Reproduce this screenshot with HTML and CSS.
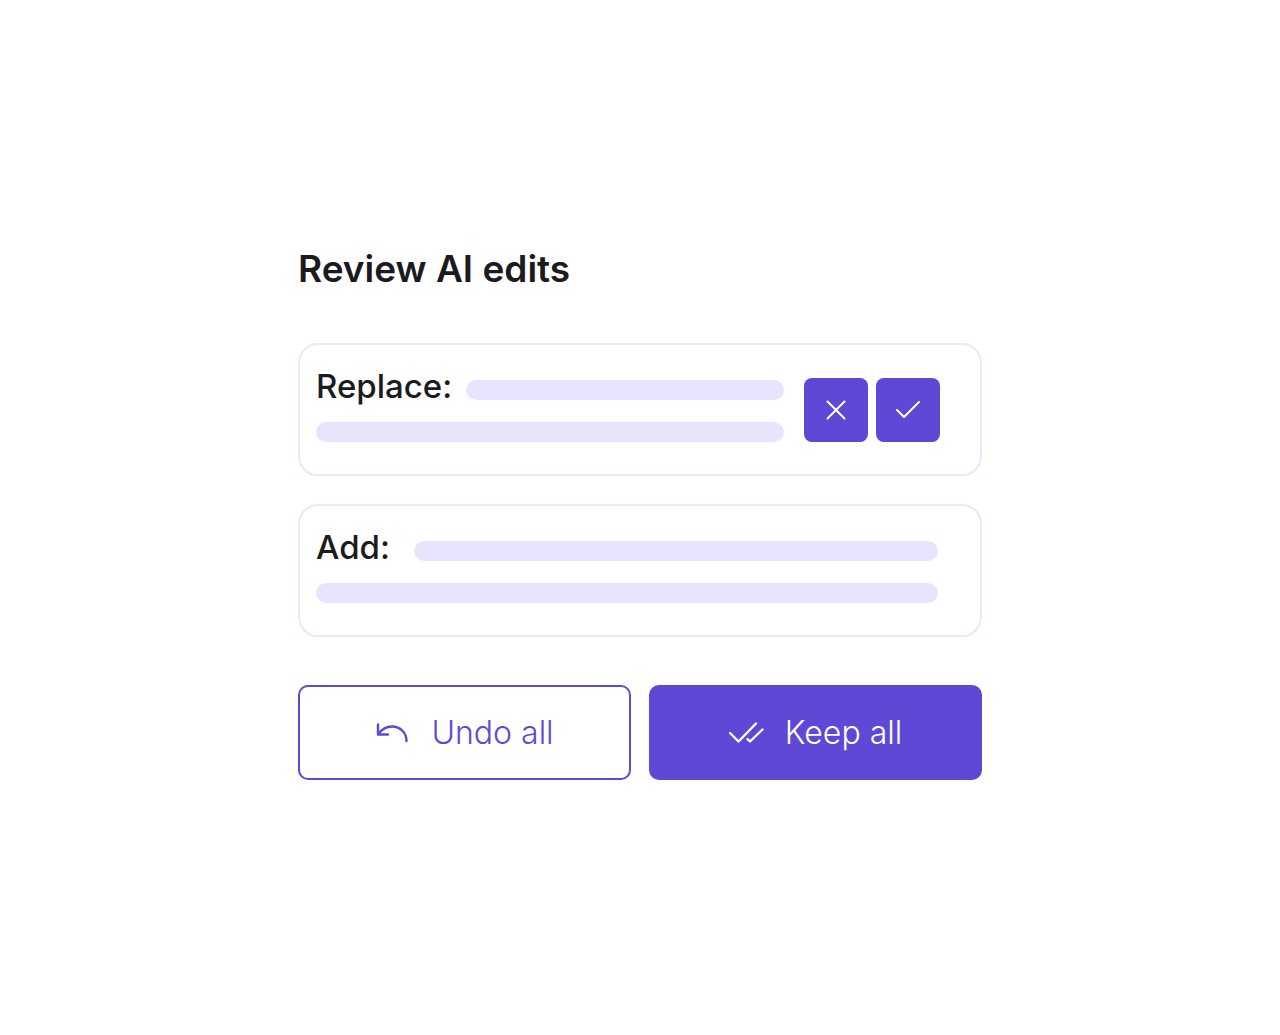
FILE: index.html
```html
<!DOCTYPE html>
<html lang="en">
<head>
  <meta charset="UTF-8">
  <meta name="viewport" content="width=device-width, initial-scale=1.0">
  <title>Review AI edits</title>
  <link rel="stylesheet" href="styles.css">
</head>
<body>
  <main class="review">
    <h1>Review AI edits</h1>

    <div class="edit-list">
      <section class="edit-card">
        <div class="edit-text">
          <div class="edit-row">
            <h2 class="label-replace">Replace:</h2>
            <span class="bar"></span>
          </div>
          <span class="bar"></span>
        </div>
        <div class="edit-actions">
          <button type="button" class="icon-btn" aria-label="Undo edit">
            <svg width="64" height="64" viewBox="0 0 64 64"><path d="M23.5 23.5l17 17M40.5 23.5l-17 17"/></svg>
          </button>
          <button type="button" class="icon-btn" aria-label="Keep edit">
            <svg width="64" height="64" viewBox="0 0 64 64"><path d="M21 32l7 7L43 24"/></svg>
          </button>
        </div>
      </section>

      <section class="edit-card edit-card-add">
        <div class="edit-text">
          <div class="edit-row">
            <h2 class="label-add">Add:</h2>
            <span class="bar"></span>
          </div>
          <span class="bar"></span>
        </div>
      </section>
    </div>

    <div class="review-actions">
      <button type="button" class="btn btn-outline">
        <svg width="36" height="28" viewBox="0 0 36 28"><path stroke-width="2.4" d="M3 5.5v10h10M3.5 15C7 10 11.5 7.5 17 7.5C25.5 7.5 31.5 14 31.5 22"/></svg>
        Undo all
      </button>
      <button type="button" class="btn btn-filled">
        <svg width="36" height="28" viewBox="0 0 36 28"><path stroke-width="2.4" d="M1 14l8.5 8.5L27 4.5M18.5 20l2.5 2.5L33.5 10.5"/></svg>
        Keep all
      </button>
    </div>
  </main>
</body>
</html>
```

FILE: styles.css
```css
* {
  margin: 0;
  padding: 0;
  box-sizing: border-box;
}

body {
  min-height: 100vh;
  display: flex;
  align-items: center;
  justify-content: center;
  background: #fff;
  color: #1b1b1f;
  font-family: 'Inter', sans-serif;
}

.review {
  width: 100%;
  max-width: 684px;
}

h1 {
  margin-bottom: 60px;
  font-size: 37px;
  font-weight: 600;
  line-height: 28px;
}

h2 {
  font-size: 33px;
  font-weight: 500;
  line-height: 28px;
  flex-shrink: 0;
}

.edit-list {
  display: flex;
  flex-direction: column;
  gap: 28px;
}

.edit-card {
  display: flex;
  align-items: flex-end;
  gap: 20px;
  padding: 27px 40px 32px 16px;
  border: 2px solid #ebe7ff;
  border-radius: 20px;
}

.edit-card-add {
  padding-right: 42px;
}

.edit-text {
  flex: 1;
  display: flex;
  flex-direction: column;
  gap: 22px;
}

.edit-row {
  display: flex;
  align-items: flex-end;
}

.edit-row .bar {
  flex: 1;
}

.label-replace {
  width: 150px;
}

.label-add {
  width: 98px;
}

.bar {
  height: 20px;
  border-radius: 10px;
  background: #e8e4fe;
}

.edit-actions {
  display: flex;
  gap: 8px;
}

svg {
  display: block;
  fill: none;
  stroke: currentColor;
  stroke-width: 2;
  stroke-linecap: round;
  stroke-linejoin: round;
}

button {
  border: none;
  font-family: inherit;
  cursor: pointer;
}

.icon-btn {
  width: 64px;
  height: 64px;
  border-radius: 8px;
  background: #5e49d6;
  color: #fff;
}

.review-actions {
  display: flex;
  gap: 18px;
  margin-top: 48px;
}

.btn {
  flex: 1;
  height: 95px;
  display: flex;
  align-items: center;
  justify-content: center;
  gap: 20px;
  border: 2px solid #5e49d6;
  border-radius: 10px;
  font-size: 32px;
  font-weight: 300;
}

.btn-outline {
  background: #fff;
  color: #5e49d6;
}

.btn-filled {
  background: #5e49d6;
  color: #fff;
}
```
